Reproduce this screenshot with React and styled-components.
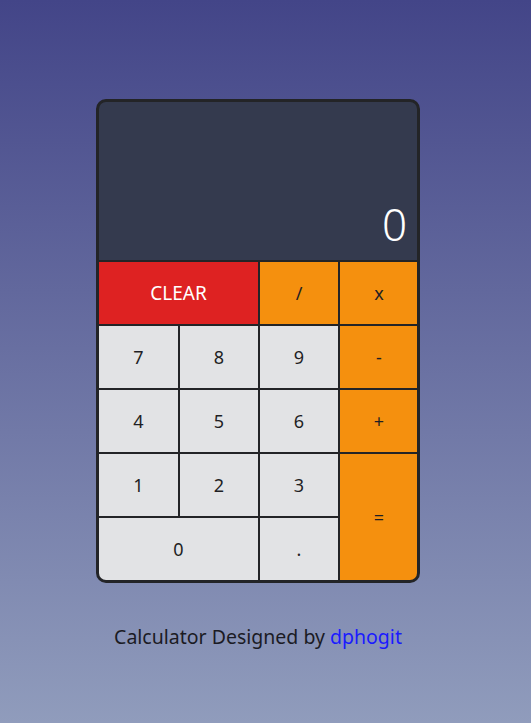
import React from 'react';
import styled, { createGlobalStyle } from 'styled-components';

const GlobalStyle = createGlobalStyle`
    html, body {
        margin: 0;
        padding: 0;
    }
    body {
        min-height: 100vh;
        background: linear-gradient(to bottom, #434588, #909cbc);
        font-family: 'Noto Sans', 'Lato', sans-serif;
    }
`;

const Page = styled.div`
    min-height: 100vh;
    padding: 99px 15px 0 0;
    box-sizing: border-box;
    display: flex;
    flex-direction: column;
    align-items: center;
`;

const Calculator = styled.div`
    width: 324px;
    box-sizing: border-box;
    border: 3px solid #232427;
    border-radius: 10px;
    background-color: #232427;
    overflow: hidden;
    display: grid;
    grid-template-columns: 79px 78px 78px 78px;
    grid-template-rows: 158px repeat(5, 62px);
    gap: 2px;
`;

const Display = styled.div`
    grid-column: 1 / -1;
    background-color: #343a4e;
    color: #fff;
    display: flex;
    align-items: flex-end;
    justify-content: flex-end;
    padding: 0 11px 14px 0;
    font-size: 44px;
    font-weight: 300;
    line-height: 1;
`;

const Key = styled.button`
    border: none;
    margin: 0;
    padding: 0;
    font-family: inherit;
    font-size: 18px;
    color: #1f1f24;
    background-color: ${props => props.$bg || '#e2e3e5'};
    grid-column: span ${props => props.$span || 1};
    grid-row: span ${props => props.$rows || 1};
    cursor: pointer;
`;

const ClearKey = styled(Key)`
    color: #fff;
    font-size: 19px;
`;

const Footer = styled.p`
    margin: 40px 0 0;
    font-size: 19.5px;
    color: #1b1b24;

    a {
        color: #1a1aff;
        text-decoration: none;
    }
`;

const orange = '#f5900e';

const App = () => {
    return (
        <>
            <GlobalStyle />
            <Page>
                <Calculator>
                    <Display>0</Display>
                    <ClearKey $span={2} $bg="#de2222">CLEAR</ClearKey>
                    <Key $bg={orange}>/</Key>
                    <Key $bg={orange}>x</Key>
                    <Key>7</Key>
                    <Key>8</Key>
                    <Key>9</Key>
                    <Key $bg={orange}>-</Key>
                    <Key>4</Key>
                    <Key>5</Key>
                    <Key>6</Key>
                    <Key $bg={orange}>+</Key>
                    <Key>1</Key>
                    <Key>2</Key>
                    <Key>3</Key>
                    <Key $bg={orange} $rows={2}>=</Key>
                    <Key $span={2}>0</Key>
                    <Key>.</Key>
                </Calculator>
                <Footer>
                    Calculator Designed by <a href="#">dphogit</a>
                </Footer>
            </Page>
        </>
    );
};

export default App;
